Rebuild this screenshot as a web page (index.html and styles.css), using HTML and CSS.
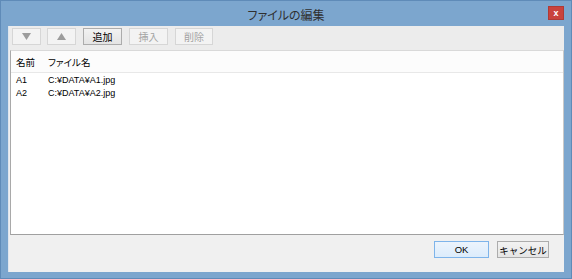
FILE: index.html
```html
<!DOCTYPE html>
<html lang="ja">
<head>
  <meta charset="UTF-8" />
  <title>ファイルの編集</title>
  <link rel="stylesheet" href="styles.css">
</head>
<body>
  <div class="window">
    <!-- Title bar -->
    <div class="titlebar">
      <span class="title">ファイルの編集</span>
      <button class="close">x</button>
    </div>

    <div class="client">
      <!-- Toolbar -->
      <div class="toolbar">
        <button class="tool arrow" disabled>
          <svg width="9" height="7" viewBox="0 0 9 7"><path d="M0 0h9L4.5 7z" fill="#9c9c9c"/></svg>
        </button>
        <button class="tool arrow" disabled>
          <svg width="9" height="7" viewBox="0 0 9 7"><path d="M0 7h9L4.5 0z" fill="#9c9c9c"/></svg>
        </button>
        <button class="tool text">追加</button>
        <button class="tool text" disabled>挿入</button>
        <button class="tool text narrow" disabled>削除</button>
      </div>

      <!-- File list -->
      <div class="list">
        <div class="row head">
          <span class="col-name">名前</span>
          <span class="col-file">ファイル名</span>
        </div>
        <div class="row item">
          <span class="col-name">A1</span>
          <span class="col-file">C:¥DATA¥A1.jpg</span>
        </div>
        <div class="row item">
          <span class="col-name">A2</span>
          <span class="col-file">C:¥DATA¥A2.jpg</span>
        </div>
      </div>

      <!-- Dialog buttons -->
      <div class="footer">
        <button class="dlg ok">OK</button>
        <button class="dlg cancel">キャンセル</button>
        <span class="grip"></span>
      </div>
    </div>
  </div>
</body>
</html>
```

FILE: styles.css
```css
body {
  margin: 0;
  font-family: "Noto Sans CJK JP", "Liberation Sans", sans-serif;
  font-feature-settings: "palt";
}

.window {
  width: 572px;
  height: 279px;
  box-sizing: border-box;
  background: #7ca6ce;
  border: 1px solid #5f8bb8;
  display: flex;
  flex-direction: column;
}

.titlebar {
  height: 25px;
  display: flex;
  align-items: center;
  justify-content: center;
  position: relative;
}

.title {
  font-size: 12px;
  color: #303030;
  margin-top: 1px;
}

.close {
  position: absolute;
  top: 5px;
  right: 7px;
  width: 16px;
  height: 14px;
  padding: 0;
  border: 1px solid #b03a36;
  background: #c9433e;
  color: #fff;
  font-family: "Liberation Sans", sans-serif;
  font-size: 9px;
  font-weight: bold;
  line-height: 11px;
}

.client {
  flex: 1;
  margin: 0 7px 6px 7px;
  background: #f0f0f0;
  border-left: 1px solid #dfe6ee;
  display: flex;
  flex-direction: column;
}

.toolbar {
  height: 24px;
  box-sizing: border-box;
  padding: 2px 0 0 3px;
  display: flex;
  gap: 6px;
  align-items: flex-start;
  background: #ececec;
}

.tool {
  height: 17px;
  padding: 0;
  border: 1px solid #acacac;
  background: linear-gradient(to bottom, #f2f2f2, #e4e4e4);
  font-family: inherit;
  font-size: 10px;
  color: #000;
  display: flex;
  align-items: center;
  justify-content: center;
}

.tool:disabled {
  border-color: #d6d6d6;
  background: #f3f3f3;
  color: #a3a3a3;
}

.arrow {
  width: 29px;
}

.text {
  width: 39px;
  margin-left: 1px;
}

.narrow {
  width: 38px;
}

.list {
  flex: 1;
  margin-left: 1px;
  background: #fff;
  border-top: 1px solid #d9d9d9;
  border-left: 1px solid #a9a9a9;
  border-right: 1px solid #c9c9c9;
  border-bottom: 1px solid #a0a0a0;
  font-size: 9.5px;
  color: #000;
}

.row {
  display: flex;
  align-items: center;
}

.head {
  height: 21px;
  border-bottom: 1px solid #e8e8e8;
  background: #fcfcfc;
}

.col-name {
  width: 32px;
  padding-left: 5px;
}

.item {
  height: 13px;
  line-height: 13px;
  font-family: "Liberation Sans", "Noto Sans CJK JP", sans-serif;
  font-size: 9px;
}

.item:first-of-type,
.head + .item {
  margin-top: 1px;
}

.footer {
  height: 37px;
  box-sizing: border-box;
  padding: 6px 15px 0 0;
  display: flex;
  justify-content: flex-end;
  align-items: flex-start;
  gap: 8px;
  position: relative;
}

.dlg {
  height: 17px;
  padding: 0;
  font-family: inherit;
  font-size: 9.5px;
  color: #000;
  border: 1px solid #acacac;
  background: linear-gradient(to bottom, #f2f2f2, #e5e5e5);
}

.ok {
  width: 55px;
  border-color: #7eb4ea;
  background: linear-gradient(to bottom, #ecf4fc, #dcecfc);
  font-family: "Liberation Sans", sans-serif;
}

.cancel {
  width: 52px;
}

.grip {
  position: absolute;
  right: 2px;
  bottom: 3px;
  width: 5px;
  height: 5px;
  background:
    radial-gradient(circle, #b8b8b8 45%, transparent 50%) 0 0 / 2px 2px;
  clip-path: polygon(100% 0, 100% 100%, 0 100%);
}
```
